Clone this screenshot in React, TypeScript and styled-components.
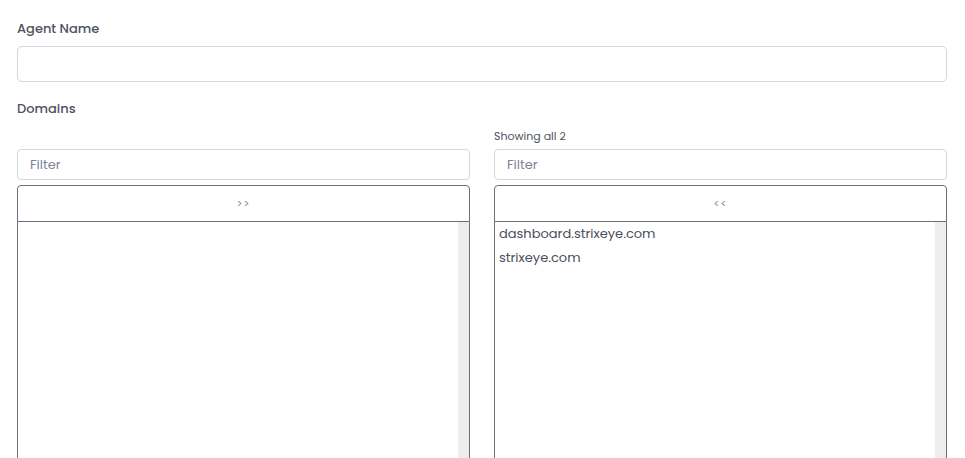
import React from 'react';
import styled, { createGlobalStyle } from 'styled-components';

const GlobalStyle = createGlobalStyle`
  html, body {
    margin: 0;
    background: #ffffff;
    font-family: 'Poppins', 'Open Sans', 'Noto Sans', sans-serif;
  }
`;

const domains = ['dashboard.strixeye.com', 'strixeye.com'];

export default function App() {
  return (
    <>
      <GlobalStyle />
      <Page>
        <Field>
          <Label>Agent Name</Label>
          <TextInput type="text" />
        </Field>
        <Field>
          <Label>Domains</Label>
          <DualList>
            <Pane>
              <Hint />
              <FilterInput placeholder="Filter" />
              <MoveButton>&gt;&gt;</MoveButton>
              <ListArea>
                <Options />
                <Track />
              </ListArea>
            </Pane>
            <Pane>
              <Hint>Showing all {domains.length}</Hint>
              <FilterInput placeholder="Filter" />
              <MoveButton>&lt;&lt;</MoveButton>
              <ListArea>
                <Options>
                  {domains.map((d) => (
                    <Option key={d}>{d}</Option>
                  ))}
                </Options>
                <Track />
              </ListArea>
            </Pane>
          </DualList>
        </Field>
      </Page>
    </>
  );
}

const Page = styled.div`
  display: flex;
  flex-direction: column;
  gap: 18px;
  padding: 20px 18px 0 17px;
`;

const Field = styled.div`
  display: flex;
  flex-direction: column;
`;

const Label = styled.label`
  font-size: 13px;
  font-weight: 500;
  color: #4f5260;
  line-height: 18px;
  margin-bottom: 8px;
`;

const TextInput = styled.input`
  box-sizing: border-box;
  height: 36px;
  width: 100%;
  border: 1px solid #d5d7dc;
  border-radius: 5px;
  padding: 0 12px;
  font: inherit;
  outline: none;
`;

const DualList = styled.div`
  display: grid;
  grid-template-columns: 1fr 1fr;
  gap: 24px;
  margin-top: 2px;
`;

const Pane = styled.div`
  display: flex;
  flex-direction: column;
`;

const Hint = styled.div`
  height: 16px;
  font-size: 11px;
  line-height: 16px;
  color: #4f5260;
  margin-bottom: 5px;
`;

const FilterInput = styled.input`
  box-sizing: border-box;
  height: 31px;
  width: 100%;
  border: 1px solid #d5d7dc;
  border-radius: 4px;
  padding: 0 12px;
  font-family: inherit;
  font-size: 13px;
  color: #3f4254;
  outline: none;
  margin-bottom: 5px;

  &::placeholder {
    color: #7e8299;
  }
`;

const MoveButton = styled.button`
  height: 37px;
  border: 1px solid #6b6d7c;
  border-radius: 4px 4px 0 0;
  background: #ffffff;
  color: #8a8ca0;
  font-family: inherit;
  font-size: 11px;
  letter-spacing: 1px;
  padding: 0;
  cursor: pointer;
`;

const ListArea = styled.div`
  display: flex;
  height: 250px;
  border: 1px solid #6b6d7c;
  border-top: none;
`;

const Options = styled.div`
  flex: 1;
`;

const Track = styled.div`
  width: 11px;
  background: #eeedeb;
`;

const Option = styled.div`
  font-size: 13px;
  line-height: 24px;
  color: #4a4d5a;
  padding-left: 4px;
`;
